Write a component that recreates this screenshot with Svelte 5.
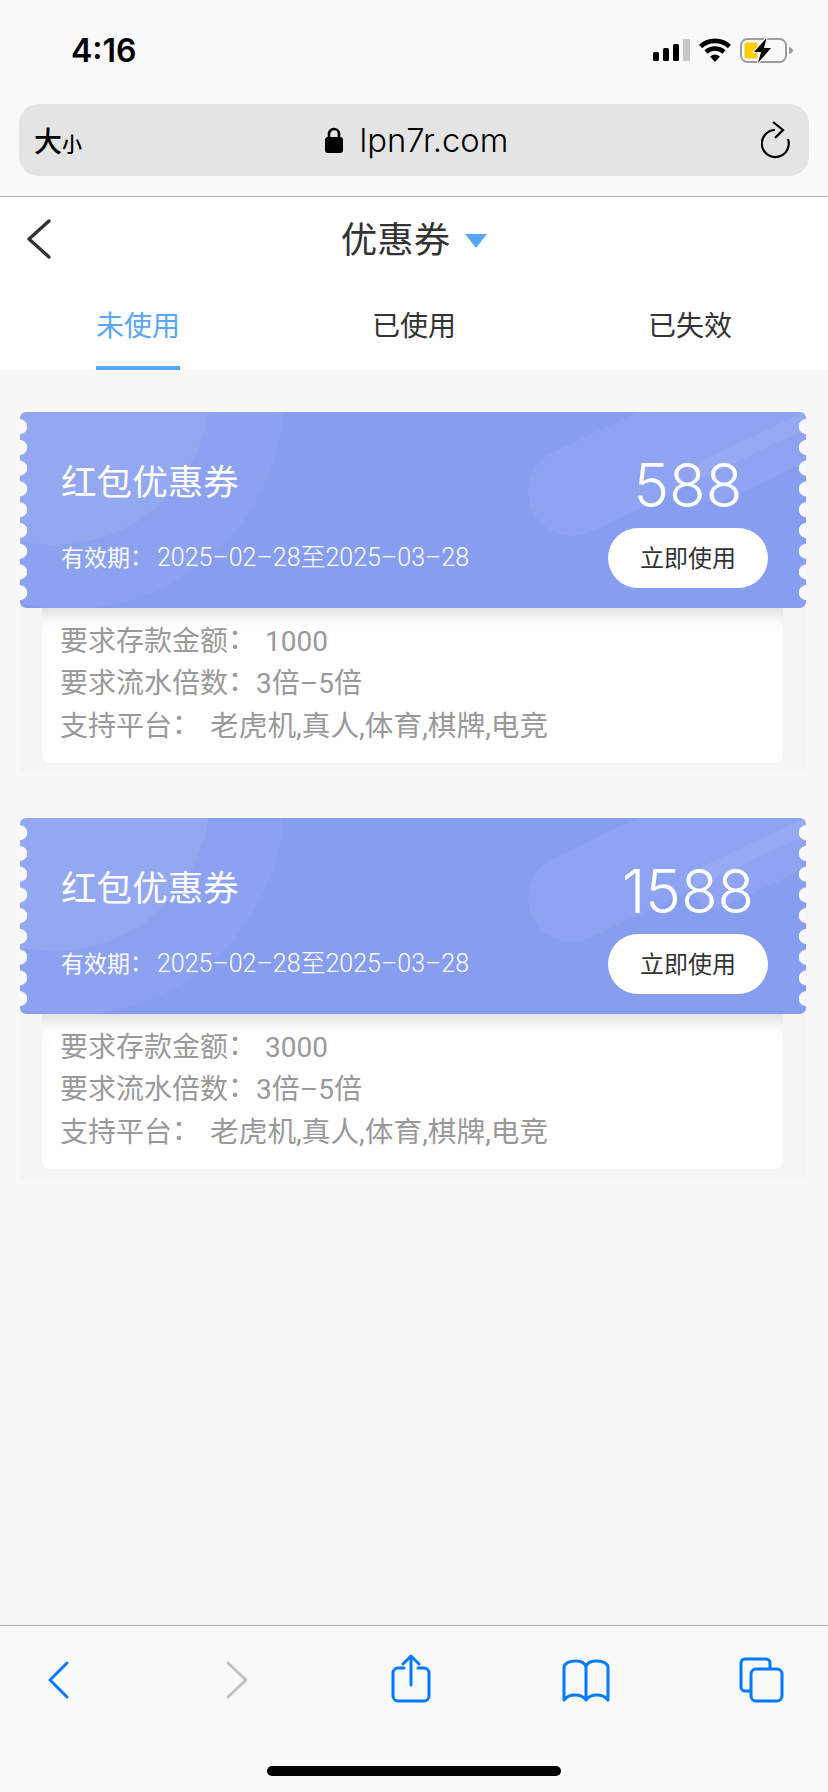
<script>
    const coupons = [
        { amount: 588, deposit: 1000 },
        { amount: 1588, deposit: 3000 }
    ];
    const tabs = ["未使用", "已使用", "已失效"];
    let activeTab = $state(0);
</script>

<div class="page">
    <!-- browser chrome, top -->
    <header class="chrome">
        <div class="status">
            <span class="time">4:16</span>
            <div class="status-icons">
                <svg width="37" height="24" viewBox="0 0 37 24">
                    <rect x="0" y="14" width="6" height="9" rx="1.5" />
                    <rect x="10" y="10" width="6" height="13" rx="1.5" />
                    <rect x="20" y="6" width="6" height="17" rx="1.5" />
                    <rect x="30" y="1" width="7" height="22" rx="1" fill="#c6c6c6" />
                </svg>
                <svg width="32" height="24" viewBox="0 0 32 24">
                    <g fill="none" stroke="#000" stroke-width="4.6">
                        <path d="M1.6 8.5 C9.6 1 22.4 1 30.4 8.5" />
                        <path d="M7 14 C12 9.4 20 9.4 25 14" />
                    </g>
                    <path d="M11 18.6 C14 16 18 16 21 18.6 L16 24 Z" />
                </svg>
                <svg width="54" height="27" viewBox="0 0 54 27">
                    <rect x="1" y="2" width="45" height="23" rx="6.5" fill="none" stroke="#9c9c9c" stroke-width="2" />
                    <path d="M49 10 C51.5 10.6 53 12 53 13.5 C53 15 51.5 16.4 49 17 Z" fill="#9c9c9c" />
                    <rect x="4.5" y="5.5" width="13" height="16" rx="2" fill="#ffcc00" />
                    <path
                        d="M26.5 1 L14 15 H21 L18 26 L31 11 H24 Z"
                        stroke="#f9f9f9"
                        stroke-width="2"
                        paint-order="stroke"
                    />
                </svg>
            </div>
        </div>

        <div class="urlbar">
            <span class="textsize"><b>大</b><small>小</small></span>
            <div class="address">
                <svg width="18" height="26" viewBox="0 0 18 26">
                    <path d="M4 11 V7 a5 5 0 0 1 10 0 V11" fill="none" stroke="#000" stroke-width="2.6" />
                    <rect x="0" y="10" width="18" height="16" rx="3" />
                </svg>
                <span>lpn7r.com</span>
            </div>
            <svg class="reload" width="30" height="38" viewBox="0 0 30 38" fill="none" stroke="#000" stroke-width="2.2">
                <path d="M14 9 A13.5 13.5 0 1 0 27 18" />
                <path d="M12 1 L22 9 L14 17" />
            </svg>
        </div>
    </header>

    <!-- page title and tabs -->
    <nav>
        <div class="titlebar">
            <svg class="back" width="26" height="40" viewBox="0 0 26 40" fill="none" stroke="#333" stroke-width="3.4" stroke-linecap="round" stroke-linejoin="round">
                <path d="M23 2 L3 20 L23 38" />
            </svg>
            <h1>优惠券</h1>
            <i class="caret"></i>
        </div>
        <div class="tabs">
            {#each tabs as tab, i}
                <button class:active={activeTab === i} onclick={() => (activeTab = i)}>
                    <span>{tab}</span>
                </button>
            {/each}
        </div>
    </nav>

    <main>
        {#each coupons as coupon}
            <section class="coupon">
                <div class="ticket">
                    <svg class="decor" viewBox="0 0 786 196" width="786" height="196">
                        <circle cx="50" cy="-17" r="214" fill="#fff" opacity="0.05" />
                        <circle cx="35" cy="-22" r="155" fill="#fff" opacity="0.07" />
                        <path d="M552 80 L790 -34" stroke="#fff" stroke-opacity="0.07" stroke-width="88" stroke-linecap="round" />
                        <path d="M695 68 L810 13" stroke="#fff" stroke-opacity="0.07" stroke-width="46" stroke-linecap="round" />
                    </svg>
                    <div class="info">
                        <h2>红包优惠券</h2>
                        <p class="expiry">有效期<span class="colon">：</span><span class="dates">2025–02–28至2025–03–28</span></p>
                    </div>
                    <div class="action">
                        <strong>{coupon.amount}</strong>
                        <button>立即使用</button>
                    </div>
                </div>
                <div class="details">
                    <p>要求存款金额<span class="colon">：</span><span class="deposit">{coupon.deposit}</span></p>
                    <p>要求流水倍数<span class="colon">：</span><span>3倍–5倍</span></p>
                    <p>支持平台<span class="colon">：</span><span class="platforms">老虎机,真人,体育,棋牌,电竞</span></p>
                </div>
            </section>
        {/each}
    </main>

    <!-- browser chrome, bottom -->
    <footer>
        <div class="toolbar">
            <svg width="44" height="50" viewBox="0 0 44 50" stroke="#007aff">
                <path d="M31 9 L14 26 L31 43" />
            </svg>
            <svg width="44" height="50" viewBox="0 0 44 50" stroke="#c1c1c1">
                <path d="M13 9 L31 26 L13 43" />
            </svg>
            <svg width="44" height="50" viewBox="0 0 44 50" stroke="#007aff">
                <path d="M15 14 H9 a5 5 0 0 0 -5 5 V42 a5 5 0 0 0 5 5 H35 a5 5 0 0 0 5 -5 V19 a5 5 0 0 0 -5 -5 H29" />
                <path d="M22 2 V31 M14 10 L22 2 L30 10" />
            </svg>
            <svg width="44" height="50" viewBox="0 0 44 50" stroke="#007aff">
                <path d="M22 13 C21 9 17 7 12 7 C6 7 1 9 0 13 V46 C3 42 7 41 11 41 C16 41 20 43 22 46 C24 43 28 41 33 41 C37 41 41 42 44 46 V13 C43 9 38 7 32 7 C27 7 23 9 22 13 V46" />
            </svg>
            <svg width="44" height="50" viewBox="0 0 44 50" stroke="#007aff">
                <path d="M11 37 H6 a4 4 0 0 1 -4 -4 V9 a4 4 0 0 1 4 -4 H27 a4 4 0 0 1 4 4 V14" />
                <rect x="12" y="15" width="31" height="32" rx="5" />
            </svg>
        </div>
        <div class="home-bar"></div>
    </footer>
</div>

<style>
    :global(body) {
        margin: 0;
        background: #f8f8f8;
    }

    .page {
        --cjk: Roboto, "Noto Sans CJK SC", sans-serif;
        display: flex;
        flex-direction: column;
        height: 1792px;
        font-family: var(--cjk);
        background: #f8f8f8;
    }

    .chrome {
        box-sizing: border-box;
        height: 197px;
        padding: 0 19px;
        background: #f9f9f9;
        border-bottom: 1px solid #b2b2b2;
    }

    .status {
        display: flex;
        justify-content: space-between;
        align-items: center;
        height: 104px;
        padding: 0 15px 4px 52px;
        box-sizing: border-box;
    }

    .time {
        font-family: Inter, sans-serif;
        font-size: 32px;
        font-weight: 600;
        color: #000;
    }

    .status-icons {
        display: flex;
        align-items: center;
        gap: 9px;
    }

    .urlbar {
        display: grid;
        grid-template-columns: 1fr auto 1fr;
        align-items: center;
        height: 72px;
        padding: 0 18px 0 15px;
        background: #e4e4e4;
        border-radius: 20px;
    }

    .textsize b {
        font-size: 28px;
        font-weight: 500;
        color: #000;
    }

    .textsize small {
        font-size: 20px;
        font-weight: 500;
        color: #000;
    }

    .address {
        display: flex;
        align-items: center;
        gap: 17px;
        margin-left: 8px;
        font-family: Inter, sans-serif;
        font-size: 32.8px;
        font-weight: 300;
        color: #000;
    }

    .reload {
        justify-self: end;
    }

    nav {
        background: #fff;
    }

    .titlebar {
        display: flex;
        justify-content: center;
        align-items: center;
        height: 84px;
        padding-top: 3px;
        box-sizing: border-box;
        position: relative;
    }

    .back {
        position: absolute;
        left: 26px;
        top: 22px;
    }

    h1 {
        margin: 0 15px 0 0;
        font-size: 36.5px;
        font-weight: 400;
        color: #333;
        line-height: 44px;
    }

    .caret {
        width: 0;
        height: 0;
        border-left: 11px solid transparent;
        border-right: 11px solid transparent;
        border-top: 14px solid #57a6fb;
    }

    .tabs {
        display: grid;
        grid-template-columns: repeat(3, 1fr);
        height: 89px;
    }

    .tabs button {
        display: flex;
        justify-content: center;
        padding: 0;
        border: 0;
        background: none;
        font: inherit;
        cursor: pointer;
    }

    .tabs span {
        box-sizing: border-box;
        height: 89px;
        padding: 28px 0 0;
        font-size: 28px;
        line-height: 36px;
        color: #333;
    }

    .tabs .active span {
        color: #57a6fb;
        border-bottom: 4px solid #57a6fb;
    }

    main {
        flex: 1;
        display: flex;
        flex-direction: column;
        gap: 45px;
        padding: 42px 21px 0 20px;
    }

    .coupon {
        height: 361px;
        background: #f5f5f5;
    }

    .ticket {
        position: relative;
        z-index: 1;
        display: flex;
        justify-content: space-between;
        box-sizing: border-box;
        width: 786px;
        height: 196px;
        padding: 0 38px 0 41px;
        background: #869df0;
        border-radius: 6px;
        overflow: hidden;
        color: #fff;
    }

    /* scalloped edges */
    .ticket::before,
    .ticket::after {
        content: "";
        position: absolute;
        top: 0;
        bottom: 0;
        width: 8px;
        background-size: 8px 20.75px;
        background-repeat: repeat-y;
        background-position: 0 4.3px;
    }

    .ticket::before {
        left: 0;
        background-image: radial-gradient(circle at 0 50%, #f9f9f9 7px, transparent 7.6px);
    }

    .ticket::after {
        right: 0;
        background-image: radial-gradient(circle at 100% 50%, #f9f9f9 7px, transparent 7.6px);
    }

    .decor {
        position: absolute;
        left: 0;
        top: 0;
    }

    .info,
    .action {
        position: relative;
    }

    .info {
        padding-top: 49px;
    }

    h2 {
        margin: 0;
        font-size: 35.6px;
        font-weight: 400;
        line-height: 44px;
    }

    .expiry {
        margin: 38px 0 0;
        font-size: 23px;
        line-height: 30px;
        white-space: nowrap;
    }

    .colon {
        vertical-align: 0.06em;
        line-height: 1;
    }

    .dates {
        font-size: 25px;
        font-weight: 300;
        margin-left: 4px;
    }

    .action {
        display: flex;
        flex-direction: column;
        align-items: center;
        width: 160px;
        padding-top: 38px;
    }

    .action strong {
        height: 70px;
        margin-bottom: 8px;
        font-family: Inter, sans-serif;
        font-size: 60px;
        font-weight: 300;
        line-height: 70px;
    }

    .action button {
        width: 160px;
        height: 60px;
        padding: 0 0 3px;
        border: 0;
        border-radius: 30px;
        background: #fff;
        color: #333;
        font: inherit;
        font-size: 24px;
    }

    .details {
        box-sizing: border-box;
        height: 155px;
        margin: 0 24px 0 22px;
        padding: 13px 0 0 18px;
        background: #fff;
        border-radius: 0 0 8px 8px;
        box-shadow: inset 0 16px 14px -8px rgba(0, 0, 0, 0.12);
    }

    .details p {
        margin: 0;
        font-size: 28px;
        line-height: 42px;
        color: #999;
        white-space: nowrap;
    }

    .deposit {
        margin-left: 9px;
    }

    .platforms {
        margin-left: 10px;
        font-size: 28.7px;
    }

    footer {
        box-sizing: border-box;
        height: 167px;
        background: #f9f9f9;
        border-top: 1px solid #b2b2b2;
    }

    .toolbar {
        display: grid;
        grid-template-columns: 179px 174px 175px 175px 44px;
        height: 50px;
        padding: 28px 0 0 36px;
    }

    .toolbar svg {
        overflow: visible;
        fill: none;
        stroke-width: 3;
        stroke-linecap: round;
        stroke-linejoin: round;
    }

    .home-bar {
        width: 294px;
        height: 10px;
        margin: 62px auto 0;
        background: #000;
        border-radius: 5px;
    }
</style>
